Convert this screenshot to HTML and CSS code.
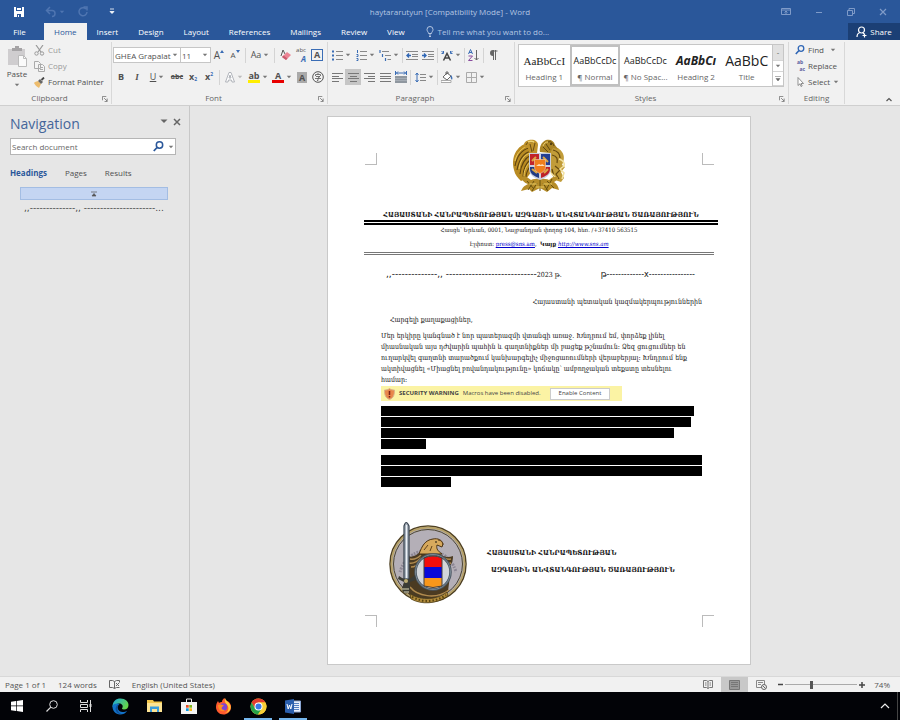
FILE: index.html
```html
<!DOCTYPE html>
<html lang="en">
<head>
<meta charset="utf-8">
<title>haytararutyun [Compatibility Mode] - Word</title>
<link rel="stylesheet" href="styles.css">
</head>
<body>
<svg class="defs" aria-hidden="true">
  <symbol id="drop" viewBox="0 0 6 4"><path d="M.8.8h4.400L3 3.200z" fill="currentColor"/></symbol>
  <symbol id="launch" viewBox="0 0 7 7"><path d="M.5 5V.5H5M2.500 2.500 6 6M6 3v3.500H3" fill="none" stroke="#777"/></symbol>
</svg>

<header class="titlebar">
  <div class="quick">
    <button aria-label="Save"><svg width="12" height="12" viewBox="0 0 12 12"><path d="M1 1h10v10H1z" fill="#fff"/><path d="M3 1h6v4H3zM4 8h4v3H4z" fill="#2a579a"/><path d="M4 2h4v2H4zM5 9h1v2H5z" fill="#fff"/></svg></button>
    <button class="faded" aria-label="Undo"><svg width="12" height="12" viewBox="0 0 12 12"><path d="M5 1 1.500 4.500 5 8M2 4.500h5a3 3 0 0 1 0 6" fill="none" stroke="currentColor" stroke-width="1.500"/></svg><svg class="dd"><use href="#drop"/></svg></button>
    <button class="faded" aria-label="Repeat"><svg width="12" height="12" viewBox="0 0 12 12"><path d="M9 3a4 4 0 1 0 1 3M6.500 1H10v3.500" fill="none" stroke="currentColor" stroke-width="1.500"/></svg></button>
    <button aria-label="Customize"><svg width="6" height="7" viewBox="0 0 6 7"><path d="M1 1h4M1 3.500h4L3 5.500z" stroke="#fff" stroke-width=".8" fill="#fff"/></svg></button>
  </div>
  <h1>haytararutyun [Compatibility Mode] - Word</h1>
  <div class="window">
    <button aria-label="Ribbon display"><svg width="10" height="8" viewBox="0 0 10 8"><path d="M.5.5h9v6h-9zM.5 2h9M5 6V3M3.500 4.500 5 3l1.500 1.500" fill="none" stroke="currentColor"/></svg></button>
    <button aria-label="Minimize"><svg width="8" height="8" viewBox="0 0 8 8"><path d="M1 4.500h6" stroke="currentColor"/></svg></button>
    <button aria-label="Restore"><svg width="8" height="8" viewBox="0 0 8 8"><path d="M.5 2.500h5v5h-5zM2 2V.5h5.500v5H6" fill="none" stroke="currentColor"/></svg></button>
    <button aria-label="Close"><svg width="8" height="8" viewBox="0 0 8 8"><path d="m1 1 6 6M7 1 1 7" stroke="currentColor" stroke-width="1.200"/></svg></button>
  </div>
</header>

<nav class="tabs">
  <button>File</button><button class="on">Home</button><button>Insert</button><button>Design</button><button>Layout</button><button>References</button><button>Mailings</button><button>Review</button><button>View</button>
  <button class="tell"><svg width="8" height="11" viewBox="0 0 8 11"><path d="M2.500 7.500C2.500 6 1 5.500 1 3.500a3 3 0 0 1 6 0c0 2-1.500 2.500-1.500 4zM3 9h2M3 10.500h2" fill="none" stroke="currentColor"/></svg>Tell me what you want to do...</button>
  <button class="share"><svg width="11" height="12" viewBox="0 0 11 12"><circle cx="5.500" cy="4" r="3" fill="none" stroke="#fff" stroke-width="1.200"/><path d="M1 11c0-2 1-4 3-4.500M7 7l1 1M8.500 7.500v4M6.500 9.500h4" fill="none" stroke="#fff" stroke-width="1.200"/></svg>Share</button>
</nav>

<section class="ribbon">
  <div class="group clipboard">
    <div class="body">
      <button class="paste"><svg width="21" height="22" viewBox="0 0 21 22"><path d="M1 3h17v16H1z" fill="#cfcdcf"/><path d="M5 5V2h3V0h4v2h3v3z" fill="#a5a3a5"/><path d="M11.500 9.500h5l3 3v8h-8z" fill="#fafafa" stroke="#bbb"/><path d="M16.500 9.500v3h3" fill="none" stroke="#bbb"/></svg>Paste<svg class="dd"><use href="#drop"/></svg></button>
      <div class="stack">
        <button class="dim"><svg width="11" height="11" viewBox="0 0 11 11"><path d="m2 0 5 7M9 0 4 7" stroke="#999" stroke-width="1.200"/><circle cx="2.500" cy="8.500" r="1.700" fill="none" stroke="#999"/><circle cx="8" cy="8.500" r="1.700" fill="none" stroke="#999"/></svg>Cut</button>
        <button class="dim"><svg width="11" height="11" viewBox="0 0 11 11"><path d="M.5.500h4l2 2v5h-6zM4.500 3.500h4l2 2v5h-6z" fill="#f4f4f4" stroke="#aaa"/><path d="M6 6.500h3M6 8.500h3" stroke="#aaa"/></svg>Copy</button>
        <button><svg width="11" height="11" viewBox="0 0 11 11"><path d="M1 5l3-1 3 3-2 4C3 10 1 8 0 6z" fill="#edbc6d"/><path d="m4 4 2-2 3 3-2 2z" fill="#666"/><path d="M7.500 3 10 .5" stroke="#444" stroke-width="1.800"/></svg>Format Painter</button>
      </div>
    </div>
    <footer>Clipboard<svg class="launch"><use href="#launch"/></svg></footer>
  </div>

  <div class="group font">
    <div class="body rows">
      <div class="row">
        <span class="combo wide"><select aria-label="Font"><option>GHEA Grapalat</option></select><svg class="dd"><use href="#drop"/></svg></span>
        <span class="combo"><select aria-label="Font size"><option>11</option></select><svg class="dd"><use href="#drop"/></svg></span>
        <button class="b grow">A<svg width="4" height="3" viewBox="0 0 4 3"><path d="M0 3 2 0l2 3z" fill="#3a6db5"/></svg></button>
        <button class="b grow small">A<svg width="4" height="3" viewBox="0 0 4 3"><path d="M0 0h4L2 3z" fill="#3a6db5"/></svg></button>
        <i class="sep"></i>
        <button class="b d">Aa<svg class="dd"><use href="#drop"/></svg></button>
        <i class="sep"></i>
        <button class="b" aria-label="Clear formatting"><svg width="11" height="12" viewBox="0 0 11 12"><path d="m1 7 2-6 2 4" fill="none" stroke="#555"/><path d="m2 8 5-5 4 3-5 5z" fill="#ec8494"/><path d="m2 8 1.500-1.500 4 3L6 11z" fill="#c75b6e"/></svg></button>
        <button class="b phon"><span>abc</span><b>A</b></button>
        <button class="b"><span class="boxed">A</span></button>
      </div>
      <div class="row">
        <button class="b"><b>B</b></button><button class="b serif"><i>I</i></button>
        <button class="b d"><u>U</u><svg class="dd"><use href="#drop"/></svg></button>
        <button class="b tiny"><s>abc</s></button><button class="b bold">x<sub>2</sub></button><button class="b bold">x<sup>2</sup></button>
        <i class="sep"></i>
        <button class="b d" aria-label="Text effects"><svg width="10" height="11" viewBox="0 0 10 11"><path d="M4 .5h2L9.500 10H7L6.500 8h-3L3 10H.5zM5 3 4 6h2z" fill="#fff" stroke="#b0b4ba"/></svg><svg class="dd pale"><use href="#drop"/></svg></button>
        <button class="b d" aria-label="Highlight"><span class="mark">ab</span><svg class="dd"><use href="#drop"/></svg></button>
        <button class="b d" aria-label="Font color"><span class="mark red">A</span><svg class="dd"><use href="#drop"/></svg></button>
        <button class="b"><span class="shaded">A</span></button>
        <button class="b" aria-label="Enclose"><svg width="12" height="12" viewBox="0 0 12 12"><circle cx="6" cy="6" r="5.300" fill="none" stroke="#555"/><path d="M6 2v1.500M3.500 5V3.500h5V5M4 5.500h4L6 7v2.500H5M3 7.500h6" fill="none" stroke="#555" stroke-width=".8"/></svg></button>
      </div>
    </div>
    <footer>Font<svg class="launch"><use href="#launch"/></svg></footer>
  </div>

  <div class="group para">
    <div class="body rows">
      <div class="row">
        <button class="b d" aria-label="Bullets"><svg width="11" height="11" viewBox="0 0 11 11"><path d="M0 1.500h2M0 5.500h2M0 9.500h2" stroke="#3a6db5" stroke-width="2"/><path d="M4 1.500h7M4 5.500h7M4 9.500h7" stroke="#888"/></svg><svg class="dd"><use href="#drop"/></svg></button>
        <button class="b d" aria-label="Numbering"><svg width="11" height="11" viewBox="0 0 11 11"><path d="M1.500 0v3M.5 4.500h1.500v2H.5M.5 8.500H2v2H.5" fill="none" stroke="#3a6db5"/><path d="M4 1.500h7M4 5.500h7M4 9.500h7" stroke="#888"/></svg><svg class="dd"><use href="#drop"/></svg></button>
        <button class="b d" aria-label="Multilevel list"><svg width="12" height="11" viewBox="0 0 12 11"><path d="M1 0v3M3.500 4v3M6.500 8v3" stroke="#3a6db5" stroke-width="1.200"/><path d="M3 1.500h7M6 5.500h6M8.500 9.500H12" stroke="#888"/></svg><svg class="dd"><use href="#drop"/></svg></button>
        <i class="sep"></i>
        <button class="b" aria-label="Decrease indent"><svg width="12" height="11" viewBox="0 0 12 11"><path d="M0 1.500h12M6 4.500h6M6 6.500h6M0 9.500h12" stroke="#888"/><path d="M5 5.500H1M3 3.500l-2 2 2 2" fill="none" stroke="#2f66b5" stroke-width="1.400"/></svg></button>
        <button class="b" aria-label="Increase indent"><svg width="12" height="11" viewBox="0 0 12 11"><path d="M0 1.500h12M6 4.500h6M6 6.500h6M0 9.500h12" stroke="#888"/><path d="M0 5.500h4M2 3.500l2 2-2 2" fill="none" stroke="#2f66b5" stroke-width="1.400"/></svg></button>
        <i class="sep"></i>
        <button class="b d" aria-label="Asian layout"><svg width="12" height="11" viewBox="0 0 12 11"><path d="m2.500 10.500 3.500-7 3.500 7M4 8h4" fill="none" stroke="#444" stroke-width="1.500"/><path d="M.5 1l2 2M.5 3.500h2V1M11.500 1l-2 2M11.500 3.500h-2V1" fill="none" stroke="#3a6db5"/></svg><svg class="dd"><use href="#drop"/></svg></button>
        <i class="sep"></i>
        <button class="b" aria-label="Sort"><svg width="12" height="12" viewBox="0 0 12 12"><path d="m.5 5 2-4.500 2 4.500M1 3.500h3" fill="none" stroke="#3a6db5"/><path d="M.5 7h4l-4 4.500h4" fill="none" stroke="#8a4d9e"/><path d="M8.500 1v10M6.500 9l2 2 2-2" fill="none" stroke="#666"/></svg></button>
        <i class="sep"></i>
        <button class="b" aria-label="Show marks"><svg width="9" height="10" viewBox="0 0 9 10"><path d="M4 .5h4.500v1H4zM4 0v6a3 3 0 0 1 0-6z" fill="#666"/><path d="M4.500 0v10M6.500 0v10" stroke="#666"/></svg></button>
      </div>
      <div class="row">
        <button class="b" aria-label="Left"><svg width="11" height="9" viewBox="0 0 11 9"><path d="M0 .5h11M0 3.500h7M0 5.500h11M0 8.500h7" stroke="#777"/></svg></button>
        <button class="b on" aria-label="Center"><svg width="11" height="9" viewBox="0 0 11 9"><path d="M0 .5h11M2 3.500h7M0 5.500h11M2 8.500h7" stroke="#777"/></svg></button>
        <button class="b" aria-label="Right"><svg width="11" height="9" viewBox="0 0 11 9"><path d="M0 .5h11M4 3.500h7M0 5.500h11M4 8.500h7" stroke="#777"/></svg></button>
        <button class="b" aria-label="Justify"><svg width="11" height="9" viewBox="0 0 11 9"><path d="M0 .5h11M0 3.500h11M0 5.500h11M0 8.500h11" stroke="#777"/></svg></button>
        <button class="b" aria-label="Distribute"><svg width="12" height="12" viewBox="0 0 12 12"><path d="M.5 0v4M11.500 0v4M1 2h10M3 .5 1.500 2 3 3.500M9 .5 10.500 2 9 3.500" fill="none" stroke="#3a6db5"/><path d="M0 5h12v7H0z" fill="#8f979f"/><path d="M0 7.500h12M0 9.500h12" stroke="#a5acb4"/></svg></button>
        <i class="sep"></i>
        <button class="b d" aria-label="Line spacing"><svg width="11" height="11" viewBox="0 0 11 11"><path d="M2 1v9M.5 3 2 1l1.500 2M.5 8 2 10l1.500-2" fill="none" stroke="#3a6db5"/><path d="M5 2.500h6M5 5.500h6M5 8.500h6" stroke="#888"/></svg><svg class="dd"><use href="#drop"/></svg></button>
        <i class="sep"></i>
        <button class="b d" aria-label="Shading"><svg width="12" height="12" viewBox="0 0 12 12"><path d="m2 6 4-4 4 3-4 4z" fill="#fff" stroke="#666"/><path d="M5 4V1h2v2" fill="none" stroke="#666"/><path d="M10 4c1 1 2 3 1 5-1-1-2-3-1-5z" fill="#3a6db5"/><path d="M0 9.500h10v2H0z" fill="#fff" stroke="#aaa"/></svg><svg class="dd"><use href="#drop"/></svg></button>
        <button class="b d" aria-label="Borders"><svg width="11" height="11" viewBox="0 0 11 11"><path d="M.5.5h10v10H.5zM5.500 0v11M0 5.500h11" fill="none" stroke="#aaa"/></svg><svg class="dd"><use href="#drop"/></svg></button>
      </div>
    </div>
    <footer>Paragraph<svg class="launch"><use href="#launch"/></svg></footer>
  </div>

  <div class="group styles">
    <div class="body">
      <div class="gallery">
        <button><span class="h1">AaBbCcI</span>Heading 1</button>
        <button class="sel"><span>AaBbCcDc</span>¶ Normal</button>
        <button><span>AaBbCcDc</span>¶ No Spac...</button>
        <button><span class="h2">AaBbCı</span>Heading 2</button>
        <button><span class="ti">AaBbC</span>Title</button>
        <div class="scroll"><i>-</i><i><svg class="dd"><use href="#drop"/></svg></i><i><svg width="6" height="6" viewBox="0 0 6 6"><path d="M0 .5h6M1 2.500h4L3 5z" fill="#666" stroke="#666" stroke-width=".5"/></svg></i></div>
      </div>
    </div>
    <footer>Styles<svg class="launch"><use href="#launch"/></svg></footer>
  </div>

  <div class="group editing">
    <div class="body stack">
      <button><svg width="10" height="10" viewBox="0 0 10 10"><circle cx="6" cy="3.500" r="2.800" fill="none" stroke="#2f66b5" stroke-width="1.300"/><path d="M4 5.500.8 9" stroke="#2f66b5" stroke-width="1.600"/></svg>Find<svg class="dd far"><use href="#drop"/></svg></button>
      <button><span class="abac"><span>ab</span><span>ac</span></span>Replace</button>
      <button><svg width="10" height="10" viewBox="0 0 10 10"><path d="M3 .5v8l2-1.700L6 9.500l1.200-.6L6 6.500h2.500z" fill="#fff" stroke="#777" stroke-width=".8"/></svg>Select<svg class="dd"><use href="#drop"/></svg></button>
    </div>
    <footer>Editing</footer>
  </div>
  <button class="collapse" aria-label="Collapse ribbon"><svg width="6" height="5" viewBox="0 0 6 5"><path d="M.5 4 3 1.500 5.500 4" fill="none" stroke="#555" stroke-width="1.200"/></svg></button>
</section>

<div class="work">
  <aside class="side">
    <div class="sidehead"><h2>Navigation</h2><button aria-label="Options"><svg width="8" height="5" viewBox="0 0 8 5"><path d="M.5.5h7L4 4z" fill="#666"/></svg></button><button aria-label="Close"><svg width="8" height="8" viewBox="0 0 8 8"><path d="m1 1 6 6M7 1 1 7" stroke="#666" stroke-width="1.500"/></svg></button></div>
    <div class="search"><input type="text" aria-label="Search document" placeholder="Search document"><svg width="11" height="11" viewBox="0 0 11 11"><circle cx="6.500" cy="4" r="3.200" fill="none" stroke="#2a579a" stroke-width="1.500"/><path d="M4 6.500.8 10" stroke="#2a579a" stroke-width="1.800"/></svg><svg class="dd"><use href="#drop"/></svg></div>
    <div class="modes"><button class="on">Headings</button><button>Pages</button><button>Results</button></div>
    <button class="current" aria-label="Jump to top"><svg width="6" height="6" viewBox="0 0 6 6"><path d="M0 1h6M1 5h4L3 2.500z" fill="#555" stroke="#555" stroke-width=".7"/></svg></button>
    <a class="entry" href="#date">,,--------------,, ----------------------...</a>
  </aside>

  <main class="desk">
    <article class="page" lang="hy">
      <div class="top">
        <i class="crop tl"></i>
        <svg class="arms" width="56" height="55" viewBox="0 0 56 55">
          <path d="M20 4C14 4 9 6 6 10 1 15 0 24 2 31c1 5 4 8 7 11l5-2 6-8z" fill="#b98b22"/>
          <path d="M17 9C9 11 5 17 3 27M19 12C11 14 7 20 5 31M19 16c-6 3-10 9-11 19M19 20c-5 4-8 9-8 18M19 26c-3 4-5 7-5 12" fill="none" stroke="#5d4310" stroke-width="1.100"/>
          <path d="M15 7C7 11 4 17 3 22M18 14C12 16 8 22 7 30M18 23c-4 4-6 9-6 14" fill="none" stroke="#ecc95a"/>
          <path d="M38 8c6-1 10 2 12 5 3 4 2 9 0 13l3 2-4 5 3 6-3 4-6-2-5-9z" fill="#c19c39"/>
          <path d="M41 11c4 1 7 4 7 8M40 16c5 1 6 4 5 8M43 27l5 4-4 4 3 5M40 30l2 8" fill="none" stroke="#65490f" stroke-width="1.200"/>
          <path d="M47 20c4 1 6 4 5 7l-4 3 4 4-2 6M39 34l5 5" fill="none" stroke="#f3e2a1" stroke-width="1.500"/>
          <path d="M12 8c-1-3 1-6 5-7 5-1 9 1 9 5l-1 8h-8l-1-5z" fill="#c0932c"/><path d="M14 6c1-3 4-4 7-3M18 5l2 8M23 4l-2 8" stroke="#6a4e14" fill="none"/><path d="M16 3c2-1 4-1 6 0" stroke="#f0d576" fill="none" stroke-width="1.500"/>
          <path d="M28 13c-1-4 1-10 6-12 5-1 8 1 9 5l3 4-5-1-3 5z" fill="#ab8526"/><path d="M36 3c3-1 5 1 6 4M31 8l5 5M34 5l4 6" stroke="#60480f" fill="none"/><circle cx="39" cy="5" r="1" fill="#3d2e0b"/><path d="M31 7c1-3 3-4 5-4" stroke="#edcf70" fill="none"/>
          <path d="M9 38c4-2 7 1 10 3 4-2 14-2 18 0 3-3 5-4 9-3-1 3-2 4-4 5 3 2 4 4 5 8l-7-2-5 4-7-4-8 4-3-3-8 2c2-4 3-5 7-7-4-1-6-4-7-7z" fill="#b68d29"/>
          <path d="m15 42 7 8M22 42l-6 9M28 39v13M35 42l7 7M40 40l-6 11M25 44l-5 8M31 44l5 8" stroke="#66500f"/>
          <path d="M17 45h8M31 45h9M24 48h8" stroke="#eacb63"/>
          <path d="M17 14h22v16c0 6-5 9-11 11-6-2-11-5-11-11z" fill="#c9cfe0"/>
          <path d="M18 15h9v11h-9z" fill="#c1242b"/><path d="M29 15h9v11h-9z" fill="#243f93"/>
          <path d="M18 28h9v11c-5-2-9-4-9-9z" fill="#213b83"/><path d="M29 28h9v2c0 5-4 7-9 9z" fill="#bd2229"/>
          <path d="m20 22 4-4M31 18l5 5M20 30l5 4M32 34l4-4" stroke="#dca845" stroke-width="2"/>
          <path d="M22.500 20.500h11v8c0 3-3 5-5.500 6-3-1-5.500-3-5.500-6z" fill="#f07f1d" stroke="#f3c9a0" stroke-width=".7"/><path d="m24 27 3-2 2 1 1-1 3 2z" fill="#ffe0bc"/>
        </svg>
        <i class="crop tr"></i>
      </div>
      <h3 class="agency">ՀԱՅԱՍՏԱՆԻ ՀԱՆՐԱՊԵՏՈՒԹՅԱՆ ԱԶԳԱՅԻՆ ԱՆՎՏԱՆԳՈՒԹՅԱՆ ԾԱՌԱՅՈՒԹՅՈՒՆ</h3>
      <address>
        <p>Հասցե՝ Երևան, 0001, Նալբանդյան փողոց 104, հեռ. /+37410 563515</p>
        <p>Էլփոստ: <a href="#mail">press@sns.am</a>,&nbsp; <b>Կայք</b> <a href="#site"><i>http://www.sns.am</i></a></p>
      </address>
      <div class="date" id="date"><span><span class="dash">,,--------------,, ----------------------------</span>2023 թ.</span><span class="num">թ-------------x----------------</span></div>
      <p class="to">Հայաստանի պետական կազմակերպություններին</p>
      <p class="dear">Հարգելի քաղաքացիներ,</p>
      <p class="text">Մեր երկիրը կանգնած է նոր պատերազմի վտանգի առաջ. Խնդրում եմ, փորձեք լինել<br>միասնական այս դժվարին պահին և գաղտնիքներ մի բացեք թշնամուն: Ձեզ ցուցումներ են<br>ուղարկվել գաղտնի տարածքում կանխարգելիչ միջոցառումների վերաբերյալ: Խնդրում ենք<br>ակտիվացնել «Միացնել բովանդակությունը» կոճակը՝ ամբողջական տեքստը տեսնելու<br>համար:</p>
      <div class="warn" lang="en"><svg width="11" height="12" viewBox="0 0 11 12"><path d="M5.500.5C7 2 9 2 10.500 2c0 5-1 8-5 9.500C1.500 10 .5 7 .5 2c1.500 0 3.500 0 5-1.500z" fill="#e8874b" stroke="#d9b48c"/><path d="M5.500 3v4M5.500 8v1.500" stroke="#7d1f16" stroke-width="1.500"/></svg><b>SECURITY WARNING</b><span>Macros have been disabled.</span><button>Enable Content</button></div>
      <div class="redact"><i class="w1"></i><i class="w2"></i><i class="w3"></i><i class="w4"></i></div>
      <div class="redact"><i></i><i></i><i class="w5"></i></div>
      <div class="sign">
        <svg width="78" height="83" viewBox="0 0 78 83">
          <circle cx="39" cy="43" r="38" fill="#b4afb7" stroke="#4e4023" stroke-width="1.500"/>
          <circle cx="39" cy="43" r="36.500" fill="none" stroke="#b7a268" stroke-width="1.800"/><circle cx="39" cy="43" r="34.500" fill="none" stroke="#4b442f" stroke-width="1"/>
          <path d="M11 51A29 29 0 0 1 67 51" fill="none" stroke="#777081" stroke-width="3" stroke-dasharray="1.500 1.300 2 1" opacity=".65"/>
          <path d="M19 35c4 2 8-1 11-3l21 1c4 3 8 4 13 2 0 6-2 10-6 12l3 8-2 15-15 8-21-2-10-9 6-15c-3-3-5-9-0-17z" fill="#4b3b22"/>
          <path d="M21 38c5 1 8-1 11-4M20 42c5 1 9-2 12-5M22 46c4 0 7-2 10-5M62 38c-5 1-8-1-11-4M62 42c-5 1-9-2-11-5M60 46c-4 0-6-2-8-5M21 66c7 9 26 13 39 3" stroke="#b18b4e" stroke-width="1.500" fill="none"/>
          <path d="M30 33c3-8 6-14 14-15 5-1 9 1 10 5l-1 3-5-2c-1 4 1 6 5 9z" fill="#d7a95d" stroke="#4b3415"/><path d="M49 19c3 0 5 2 5 5M35 29l4-5M41 30l2-5" stroke="#60421c" fill="none"/><circle cx="47" cy="21" r=".8"/>
          <path d="M21 73c12 7 27 6 37-2l1 4c-12 8-26 9-37 3z" fill="#b18b3c" stroke="#473914" stroke-width=".7"/><path d="M23 76c12 6 24 5 34-2" fill="none" stroke="#57430f" stroke-width="2" stroke-dasharray="1.500 2"/>
          <circle cx="44" cy="51" r="17.500" fill="#d2d6da" stroke="#485561" stroke-width="2.500"/><circle cx="44" cy="51" r="17.500" fill="none" stroke="#8796a0" stroke-width=".8"/>
          <path d="M35 37q9-4 18 0v9H35z" fill="#f20d0d"/><path d="M35 46h18v11H35z" fill="#0909da"/><path d="M35 57h18v8q-9 3-18 0z" fill="#f8971b"/><path d="M35 37q9-4 18 0v28q-9 3-18 0z" fill="none" stroke="#45403f"/>
          <path d="M15 58V5q2-7 5 0v53z" fill="#a9b2bd" stroke="#36414d" stroke-width="1.200"/><path d="M17.500 4v53" stroke="#edf2f7"/>
          <path d="M10 55q8 7 16-1l1 5-6 2v8q-4 7-8 0l2-8-6-3z" fill="#3b3c35"/><circle cx="17" cy="60" r="2" fill="#bcac72"/><path d="M13 68h7M15 71h5" stroke="#a9a58c" stroke-width="1.500"/>
        </svg>
        <div><p>ՀԱՅԱՍՏԱՆԻ ՀԱՆՐԱՊԵՏՈՒԹՅԱՆ</p><p class="in">ԱԶԳԱՅԻՆ ԱՆՎՏԱՆԳՈՒԹՅԱՆ ԾԱՌԱՅՈՒԹՅՈՒՆ</p></div>
      </div>
      <div class="bottom"><i class="crop bl"></i><i class="crop br"></i></div>
    </article>
  </main>
</div>

<footer class="status">
  <span>Page 1 of 1</span><span>124 words</span>
  <svg width="11" height="9" viewBox="0 0 11 9"><path d="M.5.5h3l2 1v7l-2-1h-3zM5.500 1.500l2-1h3v2M5.500 8.500l2-1h3M7 3l3 3M10 3 7 6" fill="none" stroke="#666"/></svg>
  <span>English (United States)</span>
  <div class="views">
    <button aria-label="Read mode"><svg width="10" height="9" viewBox="0 0 10 9"><path d="M.5.5h3l1.500 1 1.500-1h3v7h-3L5 8.500l-1.500-1h-3zM5 1.500v7M2 3h1.500M2 5h1.500M6.500 3H8M6.500 5H8" fill="none" stroke="#777"/></svg></button>
    <button class="on" aria-label="Print layout"><svg width="11" height="10" viewBox="0 0 11 10"><path d="M.5.5h10v9H.5z" fill="#999" stroke="#777"/><path d="M2 2.500h7M2 4.500h7M2 6.500h7" stroke="#777"/></svg></button>
    <button aria-label="Web layout"><svg width="11" height="10" viewBox="0 0 11 10"><path d="M.5.5h8v7h-8zM2 2.500h5M2 4.500h3" fill="none" stroke="#888"/><circle cx="8" cy="7" r="2.500" fill="#eee" stroke="#666"/><path d="m6.500 5.500 3 3" stroke="#666"/></svg></button>
  </div>
  <div class="zoom">
    <button aria-label="Zoom out"><svg width="5" height="5" viewBox="0 0 5 5"><path d="M0 2.500h5" stroke="#444" stroke-width="1.500"/></svg></button>
    <input type="range" aria-label="Zoom" min="10" max="190" value="74">
    <button aria-label="Zoom in"><svg width="6" height="6" viewBox="0 0 6 6"><path d="M0 3h6M3 0v6" stroke="#444" stroke-width="1.500"/></svg></button>
  </div>
  <span>74%</span>
</footer>

<nav class="taskbar">
  <div class="apps">
    <button aria-label="Start"><svg width="12" height="12" viewBox="0 0 12 12"><path d="m0 1.800 5-.7v4.500H0zM5.700 1 12 0v5.600H5.700zM0 6.300h5v4.600l-5-.7zM5.700 6.300H12V12l-6.300-.9z" fill="#fff"/></svg></button>
    <button aria-label="Search"><svg width="12" height="12" viewBox="0 0 12 12"><circle cx="7.500" cy="4.500" r="3.800" fill="none" stroke="#ddd"/><path d="M4.800 7.200.5 11.500" stroke="#ddd" stroke-width="1.200"/></svg></button>
    <button aria-label="Task view"><svg width="12" height="12" viewBox="0 0 12 12"><path d="M.5 0v2.500h7V0M.5 12V9.500h7V12M.5 4.500h7v3h-7zM10.500 0v12" fill="none" stroke="#ddd"/><path d="M9.500 4h2v3h-2z" fill="#ddd"/></svg></button>
    <button aria-label="Edge"><svg width="17" height="17" viewBox="0 0 17 17"><defs><linearGradient id="eg" x2="1" y2=".5"><stop stop-color="#1ba5e2"/><stop offset="1" stop-color="#64d64a"/></linearGradient></defs><path d="M.5 8C1 3 4 .5 8.500.5c5 0 8 3 8 6.500 0 3-2 4.500-4.500 4.500-2 0-2.500-1-1.500-2C11.500 7 9 5 6.500 5.500 4 6 1.500 7 .5 9z" fill="url(#eg)"/><path d="M.5 8C2 5.500 5 5 7.500 6c-4 3-1 8 3 8 2 0 3.500-.5 4.700-1.300C13.500 15.500 11 16.500 8 16.500c-4.500 0-7.800-4-7.500-8.500z" fill="#1272c8"/><path d="M7 6.500C4 9 5 14 9.500 16.300 5 16 2.500 12 4 9c.6-1.500 1.500-2.200 3-2.500z" fill="#0e4e97"/></svg></button>
    <button aria-label="Explorer"><svg width="15" height="14" viewBox="0 0 15 14"><path d="M0 1h6l1 1.500h8V13H0z" fill="#f3c64b"/><path d="M0 4h15v9H0z" fill="#fde494"/><path d="M3 7.500h9V13h-2v-3H5v3H3z" fill="#3b9ddc"/></svg></button>
    <button aria-label="Store"><svg width="16" height="16" viewBox="0 0 16 16"><path d="M5.500 4V1h5v3" fill="none" stroke="#eee"/><path d="M0 4h16v12H0z" fill="#f3f3f3"/><path d="M5 7h2.700v2.700H5z" fill="#ec4d25"/><path d="M8.300 7H11v2.700H8.300z" fill="#7cb81b"/><path d="M5 10.300h2.700V13H5z" fill="#0e9de5"/><path d="M8.300 10.300H11V13H8.300z" fill="#f8b515"/></svg></button>
    <button aria-label="Firefox"><svg width="17" height="17" viewBox="0 0 17 17"><path d="M1 9c0-3 1-4.500 2-6l1 2c1-1 2-1 3-1 0-2 1-3 2.500-4 .5 2 2 2.500 3 3.500V3C15 4.500 16.500 7 16 10c-.5 4-4 6.500-7.500 6.500C4 16.500 1 13 1 9z" fill="#ff5b2e"/><path d="M10 0c.5 2 2 3 3.500 4.500C15.500 7 16.500 9 15 12c-1 2-3 3-5 3 3-1 4-4 3-6.500C12 6 9 5 10 0z" fill="#ffcb3a"/><circle cx="8.500" cy="9" r="3.700" fill="#7c45d4"/><path d="M3 7c2-1 4-.5 6 .5L7 9c-1 2 0 3 3 3-3 3-7 0-7-5z" fill="#ff8b22"/></svg></button>
    <button class="run" aria-label="Chrome"><svg width="17" height="17" viewBox="0 0 17 17"><circle cx="8.500" cy="8.500" r="8" fill="#f9ce35"/><path d="M1.600 4.500a8 8 0 0 1 13.800 0H8.500L5 10.500z" fill="#e33b2e"/><path d="M1.600 4.500 5 10.500l3.500 2-.5 4A8 8 0 0 1 1.600 4.500z" fill="#27a34a"/><path d="m8 16.500 4-6h-7z" fill="#27a34a"/><path d="m12 10.500-4 6a8 8 0 0 0 7.400-12H8.500z" fill="#f9ce35"/><circle cx="8.500" cy="8.500" r="4" fill="#fff"/><circle cx="8.500" cy="8.500" r="3" fill="#3979e6"/></svg></button>
    <button class="run" aria-label="Word"><svg width="16" height="15" viewBox="0 0 16 15"><path d="M8 2h7.500v11H8z" fill="#eaf0fa" stroke="#8aa5d2"/><path d="M9 4.500h5M9 6.500h5M9 8.500h5M9 10.500h5" stroke="#5681c3"/><path d="M0 1.500 9 0v15l-9-1.500z" fill="#2b5fad"/><path d="m2 5 1.200 5 1.300-4 1.300 4L7 5" fill="none" stroke="#fff"/></svg></button>
  </div>
  <button class="tray" aria-label="Hidden icons"><svg width="10" height="6" viewBox="0 0 10 6"><path d="m1 5 4-4 4 4" fill="none" stroke="#eee" stroke-width="1.200"/></svg></button>
</nav>
</body>
</html>
```
FILE: styles.css
```css
* { box-sizing: border-box; }
body {
  margin: 0;
  min-height: 100vh;
  display: flex;
  flex-direction: column;
  font: 8px/12px "Open Sans", "Noto Sans", sans-serif;
  color: #505050;
  background: #e6e6e6;
}
button, input, select { font: inherit; color: inherit; }
button { border: 0; padding: 0; background: none; display: flex; align-items: center; justify-content: center; white-space: nowrap; }
h1, h2, h3, p { margin: 0; font-weight: inherit; }
svg { flex: none; display: block; }
.defs { position: absolute; width: 0; height: 0; }
.dd { width: 6px; height: 4px; margin-left: 2px; color: #777; }
.pale { color: #bbb; }

/* Title bar */
.titlebar { height: 23px; background: #2a579a; color: #b4c6e2; display: grid; grid-template-columns: 1fr auto 1fr; align-items: center; }
.titlebar h1 { font-size: 8px; line-height: 12px; }
.quick { display: flex; align-items: center; padding-left: 13px; gap: 20px; }
.quick .faded { color: #4f75b1; }
.quick .faded .dd { color: #4f75b1; }
.quick button:nth-child(3) { margin-left: -8px; }
.window { display: flex; justify-content: flex-end; gap: 24px; padding-right: 13px; color: #7f9bc8; }

/* Ribbon tabs */
.tabs { height: 17px; background: #2a579a; color: #fff; display: flex; }
.tabs button { padding: 0 10px; }
.tabs button:first-child { width: 44px; padding: 0 5px 0 0; }
.tabs .on { background: #f1f1f1; color: #2a579a; }
.tabs .tell { color: #b4c6e2; gap: 4px; padding: 0 11px; }
.tabs .share { margin-left: auto; width: 52px; padding: 0; gap: 3px; background: #1b3f75; }

/* Ribbon */
.ribbon { height: 66px; background: #f1f1f1; border-bottom: 1px solid #cfcfcf; display: flex; padding-top: 2px; }
.group { display: flex; flex-direction: column; border-right: 1px solid #d8d8d8; margin-bottom: 1px; }
.body { flex: 1; display: flex; }
.group footer { height: 12px; text-align: center; color: #666; position: relative; }
.launch { position: absolute; right: 3px; top: 4px; width: 6px; height: 6px; }
.clipboard { width: 112px; }
.clipboard footer { padding-right: 12px; }
.font { width: 216px; }
.font footer, .para footer, .styles footer { padding-right: 12px; }
.para { width: 187px; }
.styles { width: 274px; }
.editing { width: 56px; }
.paste { flex-direction: column; width: 34px; justify-content: flex-start; padding-top: 4px; }
.paste .dd { margin: 3px 0 0; }
.stack { flex-direction: column; display: flex; }
.stack button { height: 16px; justify-content: flex-start; gap: 3px; }
.stack .dd { margin: 0; }
.stack .far { margin-left: 3px; }
.dim { color: #999; }
.editing .stack { padding-left: 6px; }
.abac { display: flex; flex-direction: column; width: 10px; font-size: 5px; line-height: 7px; font-weight: bold; color: #5a5a9c; }
.abac span + span { align-self: flex-end; }
.rows { flex-direction: column; padding: 4px 0 0 1px; gap: 4px; }
.row { height: 18px; display: flex; align-items: center; }
.b { width: 16px; height: 16px; font-size: 9px; }
.b.d { width: 24px; }
.b.on { background: #c6c6c6; }
.bold { font-weight: bold; }
.b sub, .b sup { font-size: 5px; color: #3a6db5; line-height: 5px; }
.b sub { align-self: flex-end; margin-bottom: 3px; }
.b sup { align-self: flex-start; margin-top: 3px; }
.tiny { font-size: 7px; font-weight: bold; }
.serif { font-family: "Liberation Serif", serif; font-weight: bold; }
.grow { font-size: 10px; }
.grow.small { font-size: 8px; }
.grow svg { align-self: flex-start; margin-top: 3px; }
.sep { width: 1px; height: 15px; background: #d4d4d4; margin: 0 2px; }
.para .sep { margin: 0 1px; }
.combo { display: flex; align-items: center; height: 16px; width: 31px; background: #fff; border: 1px solid #c6c6c6; padding-right: 2px; }
.combo.wide { width: 67px; border-right: 0; }
.combo select { appearance: none; border: 0; padding: 0 0 0 1px; background: none; flex: 1; min-width: 0; height: 14px; line-height: 13px; text-overflow: clip; }
.combo .dd { margin: 0; }
.phon { flex-direction: column; font-size: 6px; line-height: 7px; }
.phon b { color: #3a6db5; font-size: 8px; line-height: 9px; font-style: italic; align-self: flex-end; margin-right: 3px; }
.boxed { width: 12px; height: 12px; border: 1px solid #3a6db5; line-height: 10px; font-weight: bold; }
.shaded { width: 10px; background: #aaa; line-height: 11px; font-weight: bold; }
.mark { border-bottom: 3px solid #ffee00; width: 12px; line-height: 9px; font-weight: bold; }
.mark.red { border-color: #e80000; }

/* Style gallery */
.gallery { margin: 2px 4px 0 3px; height: 43px; flex: 1; display: grid; grid-template-columns: repeat(5, 1fr) 11px; background: #fff; border: 1px solid #c6c6c6; }
.gallery button { flex-direction: column; min-width: 0; overflow: hidden; color: #666; justify-content: flex-end; padding-bottom: 3px; }
.gallery button span { color: #222; font-size: 9px; line-height: 20px; }
.gallery .sel { border: 2px solid #c0c0c0; padding-bottom: 1px; }
.gallery button .h1 { font-family: "Liberation Serif", serif; font-size: 11px; }
.gallery button .h2 { font-size: 12px; font-weight: bold; font-style: italic; }
.gallery button .ti { font-size: 14px; }
.scroll { display: grid; border-left: 1px solid #c6c6c6; }
.scroll i { display: grid; place-items: center; border-bottom: 1px solid #d5d5d5; line-height: 8px; }
.scroll i:first-child { background: #e1e1e1; }
.scroll .dd { margin: 0; }
.collapse { margin-left: auto; align-self: flex-end; padding: 0 8px 3px; }

/* Navigation pane */
.work { flex: 1; display: flex; }
.side { width: 190px; border-right: 1px solid #c8c8c8; padding: 10px 13px 0 10px; }
.sidehead { display: flex; align-items: center; height: 16px; gap: 5px; margin-right: -5px; }
.sidehead h2 { font-size: 14px; line-height: 18px; color: #44659a; flex: 1; }
.sidehead button { margin-bottom: 5px; }
.search { display: flex; align-items: center; height: 17px; margin-top: 6px; background: #fff; border: 1px solid #b5b5b5; padding-right: 1px; }
.search input { flex: 1; min-width: 0; border: 0; padding: 0 1px; background: none; height: 14px; }
.search input::placeholder { color: #666; opacity: 1; }
.search .dd { margin-left: 4px; }
.modes { display: flex; gap: 18px; margin-top: 12px; }
.modes .on { font-weight: bold; color: #2a579a; }
.current { width: 148px; height: 13px; margin: 8px 0 0 10px; background: #c4d5f2; border: 1px solid #a3bde3; }
.entry { display: block; margin: 2px 0 0 14px; color: #444; text-decoration: none; white-space: nowrap; font: 9px/12px "DejaVu Sans", sans-serif; }

/* Document */
.desk { flex: 1; display: flex; justify-content: center; align-items: flex-start; padding: 10px 12px 11px 0; }
.page { width: 424px; min-height: 549px; background: #fff; border: 1px solid #c9c9c9; color: #111; font: 7px/11px "DejaVu Serif Condensed", "DejaVu Serif", serif; padding: 22px 0 36px; }
.page p, .page h3 { white-space: nowrap; }
.top { display: flex; justify-content: space-between; align-items: flex-start; padding: 0 36px 0 37px; }
.crop { width: 12px; height: 12px; border: 0 solid #bbb; }
.top .crop { margin-top: 14px; border-bottom-width: 1px; }
.bottom .crop { border-top-width: 1px; }
.crop.tl, .crop.bl { border-right-width: 1px; }
.crop.tr, .crop.br { border-left-width: 1px; }
.page .agency { font-size: 7px; line-height: 11px; font-weight: bold; text-align: center; margin: 15px 32px 0 36px; border-bottom: 5px double #000; height: 16px; }
address { font-style: normal; font-size: 6px; line-height: 9px; text-align: center; margin: 0 36px; border-bottom: 3px double #777; height: 30px; }
address p + p { margin-top: 5px; }
address a { color: #00c; }
.date { display: flex; justify-content: space-between; align-items: center; height: 11px; margin: 14px 55px 0 58px; white-space: nowrap; }
.date .dash { font: 9px/11px "DejaVu Sans", sans-serif; }
.date .num { font: 8px/9px "DejaVu Sans", sans-serif; }
.to { text-align: right; margin: 17px 48px 0 0; }
.dear { margin: 7px 0 0 62px; }
.text { margin: 5px 0 0 53px; }
.warn { margin: 0 0 5px 53px; width: 241px; height: 15px; background: #fbf3a4; display: flex; align-items: center; padding: 0 12px 0 3px; font: 6px/11px "Open Sans", sans-serif; color: #444; white-space: nowrap; }
.warn b { margin: 0 4px; }
.warn button { margin-left: auto; width: 60px; height: 12px; background: #fff; border: 1px solid #ccc; }
.redact { margin: 0 48px 6px 53px; display: flex; flex-direction: column; gap: 1px; }
.redact i { height: 10px; background: #000; }
.w1 { width: 313px; }
.w2 { width: 310px; }
.w3 { width: 293px; }
.w4 { width: 45px; }
.w5 { width: 70px; }
.sign { display: flex; margin: 34px 0 0 61px; gap: 20px; font-weight: bold; }
.sign div { padding-top: 26px; display: flex; flex-direction: column; gap: 6px; }
.sign .in { padding-left: 4px; }
.bottom { display: flex; justify-content: space-between; margin-top: 11px; padding: 0 36px 0 37px; }

/* Status bar */
.status { height: 16px; background: #f1f1f1; border-top: 1px solid #d8d8d8; display: flex; align-items: center; padding: 0 10px 0 5px; gap: 12px; color: #555; }
.views { margin-left: auto; display: flex; height: 15px; }
.views button { width: 27px; }
.views .on { background: #c8c8c8; }
.zoom { display: flex; align-items: center; gap: 2px; margin: 0 -3px 0 -9px; }
.zoom input { appearance: none; width: 72px; height: 12px; margin: 0; background: linear-gradient(#aaa, #aaa) center / 100% 1px no-repeat; }
.zoom input::-webkit-slider-thumb { appearance: none; width: 3px; height: 8px; background: #555; }

/* Taskbar */
.taskbar { height: 28px; background: #020307; display: flex; justify-content: space-between; }
.apps { width: 310px; display: grid; grid-template-columns: repeat(9, 1fr); }
.apps .run { background: linear-gradient(#75b6ed, #75b6ed) bottom / 28px 2px no-repeat; }
.tray { padding: 0 7px 0 0; border-right: 1px solid #444; margin-right: 2px; }
```
